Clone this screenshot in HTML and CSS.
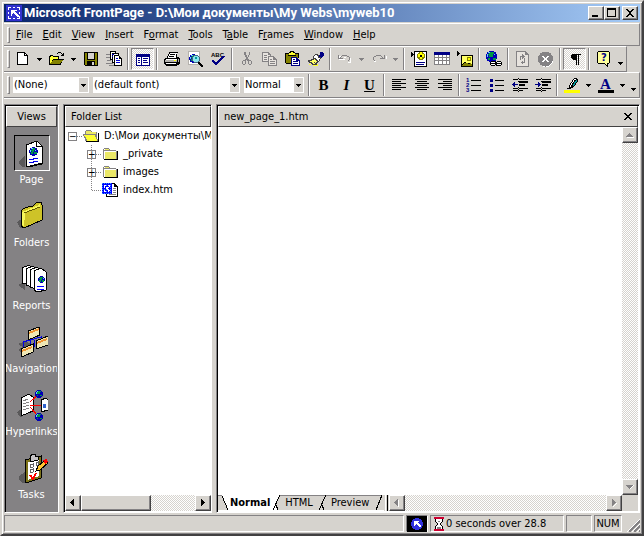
FILE: index.html
```html
<!DOCTYPE html>
<html lang="en">
<head>
<meta charset="utf-8">
<title>Microsoft FrontPage</title>
<link rel="stylesheet" href="styles.css">
</head>
<body>
<svg class="defs" aria-hidden="true">
  <pattern id="bluedither" width="2" height="2" patternUnits="userSpaceOnUse"><path d="M0 0h2v2H0z" fill="#00f"/><path d="M0 0h1v1H0z" fill="#3192ff"/></pattern>
  <symbol id="down" viewBox="0 0 5 3"><path d="M0 0h5v1H4v1H3v1H2V2H1V1H0z"/></symbol>
  <symbol id="folder" viewBox="0 0 16 14"><path d="M1 2h1V1h5v1h1v1h6v1h1v8H1z" fill="#848284"/><path d="M15 4h1v9H2v-1h13z"/><path d="M2 3V2h5v1zM2 4h12v8H2z" fill="#fff"/><path d="M3 5h11v7H3zM3 2h4v1H3z" fill="#ebe867"/></symbol>
  <symbol id="globe" viewBox="0 0 10 10"><path d="M3 0h4v1h2v2h1v4H9v2H7v1H3V9H1V7H0V3h1V1h2z" fill="#0000b5"/><path d="M3 1h4v2H6v2H3V4H1V3h2zM6 6h3v2H6zM2 6h2v2H2z" fill="#009a42"/><path d="M2 1h2v1H2zM1 3h1v2H1zM7 3h1v1H7z" fill="#63cfff"/></symbol>
</svg>
<div class="window">
  <header class="titlebar">
    <svg class="appicon" viewBox="0 0 16 16"><path fill="#3131ce" d="M0 0h16v16H0z"/><path d="M2 2h3v1H3v2H2zM7 2h2v1H7zM11 2h3v3h-1V3h-2zM13 7h1v2h-1zM13 11h1v3h-3v-1h2zM7 13h2v1H7zM2 11h1v2h2v1H2zM2 7h1v2H2z" fill="#fff"/><path d="M5 5h6v1H9v1h1v1h1v1h1v1h1v2h-2v-1h-1v-1H9V9H8V8H7v1H6v2H5z" fill="#fff"/></svg>
    <h1>Microsoft FrontPage - D:\Мои документы\My Webs\myweb10</h1>
    <button class="raised winbtn" aria-label="Minimize"><svg viewBox="0 0 12 10"><path d="M2 7h6v2H2z"/></svg></button>
    <button class="raised winbtn" aria-label="Maximize"><svg viewBox="0 0 12 10"><path d="M1 0h9v9H1zM2 2v6h7V2z" fill-rule="evenodd"/></svg></button>
    <button class="raised winbtn closebtn" aria-label="Close"><svg viewBox="0 0 12 10"><path d="M2 1h2v1h1v1h2V2h1V1h2v1H9v1H8v1H7v2h1v1h1v1h1v1H8V8H7V7H5v1H4v1H2V8h1V7h1V6h1V4H4V3H3V2H2z"/></svg></button>
  </header>
  <nav class="bar menubar">
    <span class="grip"></span>
    <button><u>F</u>ile</button><button><u>E</u>dit</button><button><u>V</u>iew</button><button><u>I</u>nsert</button><button>F<u>o</u>rmat</button><button><u>T</u>ools</button><button>T<u>a</u>ble</button><button>F<u>r</u>ames</button><button><u>W</u>indow</button><button><u>H</u>elp</button>
  </nav>
  <div class="bar toolbar standard">
    <span class="grip"></span>
    <button class="tool" aria-label="New"><svg viewBox="0 0 16 16"><path d="M2 1h8v1h1v1h1v1h1v10H2z"/><path d="M3 2h6v3h3v8H3zM10 3h1v1h-1z" fill="#fff"/></svg></button>
    <button class="drop" aria-label="New options"><svg><use href="#down"/></svg></button>
    <button class="tool" aria-label="Open"><svg viewBox="0 0 16 16"><path d="M0 5h1V4h3v1h6v3h5v1h-1v1h-1v2h-1v2H0z"/><path d="M1 6h1V5h2v1h5v2H4v1H3v2H2v1H1z" fill="#ff3"/><path d="M4 9h10v1h-1v1h-1v1h-1v1H1v-1h1v-1h1v-1h1z" fill="#848200"/><path d="M8 2h1V1h3v1h1v1h1V2h1v3h-3V4h1V3h-1V2H9v1H8z"/></svg></button>
    <button class="drop" aria-label="Open options"><svg><use href="#down"/></svg></button>
    <button class="tool" aria-label="Save"><svg viewBox="0 0 16 16"><path d="M1 1h14v14H2v-1H1z"/><path d="M2 2h2v7h8V2h2v12h-2v-4H4v4H2z" fill="#848200"/><path d="M5 2h6v6H5zM9 11h2v3H9z" fill="#d6d3ce"/></svg></button>
    <button class="tool" aria-label="Publish"><svg viewBox="0 0 16 16"><path d="M0 3h4v1H0zM0 6h4v1H0zM1 9h4v1H1zM0 12h7v1H0zM3 14h6v1H3z" fill="#848284"/><path d="M4 0h6v9H4z"/><path d="M5 1h4v7H5z" fill="#fff"/><path d="M6 2h7v10H6z"/><path d="M7 3h5v8H7z" fill="#fff"/><path d="M8 4h5v1h1v1h1v1h1v8H8z"/><path d="M9 5h4v3h2v6H9z" fill="#fff"/><path d="M6 3h2v1H6zM6 5h1v1H6zM10 7h2v1h-2zM10 9h4v1h-4zM10 11h4v1h-4z" fill="#00c"/></svg></button>
    <span class="sep"></span>
    <button class="tool pressed" aria-label="Folder list" aria-pressed="true"><svg viewBox="0 0 16 16"><path d="M1 3h14v12H1z" fill="#000084"/><path d="M2 6h4v8H2zM7 6h7v8H7z" fill="#fff"/><path d="M3 7h2v1H3zM3 9h2v1H3zM3 11h2v1H3zM8 7h5v1H8zM8 9h4v1H8zM8 11h5v1H8z" fill="#000084"/></svg></button>
    <span class="sep"></span>
    <button class="tool" aria-label="Print"><svg viewBox="0 0 16 16"><path d="M5 1h9v1h-1v4h2v1h1v6h-1v1h-2v1H2v-1H1v-1H0V8h1V7h2V5h1V3h1z"/><path d="M6 2h7v1h-1v4H4V5h1V3h1z" fill="#fff"/><path d="M6 3h5v1H6zM5 5h5v1H5z"/><path d="M2 8h11v1H2zM2 12h10v1H2z" fill="#fff"/><path d="M1 9h12v2H1zM14 8h1v3h-1z" fill="#b5b2ad"/><path d="M10 9h2v1h-2z" fill="#ff0"/></svg></button>
    <button class="tool" aria-label="Preview in browser"><svg viewBox="0 0 16 16"><path d="M1 0h12v14H1z" fill="#b5b2ad"/><path d="M2 1h10v12H2z" fill="#fff"/><use href="#globe" x="2" y="3" width="9" height="9"/><path d="M7 4h4v1h1v1h1v4h-1v1h-1v1H7v-1H6v-1H5V6h1V5h1z" fill="#426384"/><path d="M7 5h4v1h1v4h-1v1H7v-1H6V6h1z" fill="#8ce7ef"/><path d="M8 6h2v2H8z" fill="#009a9c"/><path d="M11 11h2v1h1v1h1v1h1v2h-2v-1h-1v-1h-1v-1h-1z"/></svg></button>
    <button class="tool" aria-label="Spelling"><svg viewBox="0 0 16 16"><text x="1" y="6" class="abc">ABC</text><path d="M2 9h2v1h1v1h2v-1h1V9h1V8h1V7h1V6h1V5h3v1h-1v1h-1v1h-1v1h-1v1h-1v1H9v1H8v1H7v1H5v-1H4v-1H3v-1H2z" fill="#000084"/></svg></button>
    <span class="sep"></span>
    <button class="tool" aria-label="Cut" disabled><svg viewBox="0 0 16 16"><path d="M6 1h1v3h1v2h1v2h1v1h2v1h1v3h-1v1h-2v-1H9v-3H8V9H7v1h0v3H6v1H4v-1H3v-3h1V9h2V8h1V6H6V4H5V1zM10 1h1v3h-1v2H9V4h1zM4 10v3h2v-3zM10 10v3h2v-3z" fill="#848284" fill-rule="evenodd"/></svg></button>
    <button class="tool" aria-label="Copy" disabled><svg viewBox="0 0 16 16"><path d="M0 1h7v1h1v1h1v8H0zM6 5h6v1h1v1h1v1h1v7H6z" fill="#848284"/><path d="M1 2h5v2h2v1H6v5H1zM7 6h4v3h3v5H7z" fill="#e7e3de"/><path d="M2 4h3v1H2zM2 6h3v1H2zM2 8h3v1H2zM8 8h2v1H8zM8 10h5v1H8zM8 12h5v1H8z" fill="#848284"/></svg></button>
    <button class="tool" aria-label="Paste"><svg viewBox="0 0 16 16"><path d="M0 2h4V1h1V0h4v1h1v1h4v5h-1v6H1v-1H0z"/><path d="M1 3h12v9H1z" fill="#848200"/><path d="M4 2h2V1h2v1h2v2H4z" fill="#ff3"/><path d="M3 4h8v1H3z"/><path d="M6 6h6v1h1v1h1v1h1v6H6z" fill="#000084"/><path d="M7 7h4v3h3v4H7z" fill="#fff"/><path d="M8 8h2v1H8zM8 10h5v1H8zM8 12h5v1H8z" fill="#000084"/></svg></button>
    <button class="tool" aria-label="Format painter"><svg viewBox="0 0 16 16"><path d="M12 1h3v1h1v3h-1v1h-1v1h-3V4h1z" fill="#000084"/><path d="M7 3h3v1h1v2h2v2h-1v2h-1v1h-1v1H9v2H8v1H5v-1H4v-1H3v-1H1v-1H0V9h3V8h2V5h1V4h1z" fill="#424142"/><path d="M7 4h2v1h1v2h2v1h-1v2h-1V9H9V8H8V7H6V5h1z" fill="#fff"/><path d="M4 9h2V8h1v1h1v1h1v1H8v1H7V11H6v1h1v1H5v-1H4v-1H2v-1h2z" fill="#ff6"/><path d="M5 14h4v-1h1v2H5zM1 13h2v1H1z" fill="#ff3"/></svg></button>
    <span class="sep"></span>
    <button class="tool" aria-label="Undo" disabled><svg viewBox="0 0 16 16"><path d="M2 5h2v3h4v1H2zM5 7h2V6h5v1h1v4h-2v1h3V7h-1V6z" fill="#fff"/><path d="M1 4h1v3h1V6h1V5h1V4h5v1h2v1h1v3h-1v1h-1V9h1V6h-2V5H5v1H4v1h2v1H1z" fill="#848284"/></svg></button>
    <button class="drop" aria-label="Undo list" disabled><svg><use href="#down"/></svg></button>
    <button class="tool" aria-label="Redo" disabled><svg viewBox="0 0 16 16"><path d="M10 8h6V5h-1v3h-5zM3 10h2v1H3z" fill="#fff"/><path d="M14 4h-1v3h-1V6h-1V5h-1V4H5v1H3v1H2v3h1v1h1V9H3V6h2V5h5v1h1v1H9v1h5z" fill="#848284"/></svg></button>
    <button class="drop" aria-label="Redo list" disabled><svg><use href="#down"/></svg></button>
    <span class="sep"></span>
    <button class="tool" aria-label="Component"><svg viewBox="0 0 16 16"><path d="M0 1h1v1h1v1h1v1H2v1H1v1H0zM3 0h13v16H3z"/><path d="M4 1h11v14H4z" fill="#fff"/><path d="M8 1h4v1h1v1h1v4h-1v1h-1v1H8V8H7V7H6V3h1V2h1z" fill="#848200"/><path d="M9 1h2v2h2v3h-2v2H9V6H7V3h2z" fill="#ff0"/><path d="M9 4h2v2H9z"/><path d="M5 11h9v1H5zM5 13h8v1H5z" fill="#000084"/></svg></button>
    <button class="tool" aria-label="Insert table"><svg viewBox="0 0 16 16"><path d="M0 1h16v13H0z" fill="#848284"/><path d="M0 1h16v3H0z" fill="#000084"/><path d="M1 4h3v2H1zM5 4h3v2H5zM9 4h3v2H9zM13 4h2v2h-2zM1 7h3v2H1zM5 7h3v2H5zM9 7h3v2H9zM13 7h2v2h-2zM1 10h3v3H1zM5 10h3v3H5zM9 10h3v3H9zM13 10h2v3h-2z" fill="#fff"/></svg></button>
    <button class="tool" aria-label="Insert picture"><svg viewBox="0 0 16 16"><path d="M0 0h1v1h1v1h1v1H2v1H1v1H0zM4 4h12v12H4z"/><path d="M5 5h10v10H5z" fill="#ff6"/><path d="M10 6h4v4h-4z" fill="#848200"/><path d="M11 7h2v2h-2z" fill="#ff0"/><path d="M5 13h1v-1h1v-1h2v1h2v1h1v-1h2v1h1v2H5z" fill="#848200"/><path d="M5 13h1v-1h1v-1h2v1H7v1H6v1H5zM11 12h2v1h-2z"/></svg></button>
    <span class="sep"></span>
    <button class="tool" aria-label="Hyperlink"><svg viewBox="0 0 16 16"><use href="#globe" width="11" height="11"/><path d="M5 10h5v1h1v-1h4v1h1v3h-1v1h-5v-1H9v1H5v-1H4v-3h1z"/><path d="M5 11h4v1H5zM5 13h4v1H5zM11 11h4v1h-4zM11 13h4v1h-4z" fill="#fff"/></svg></button>
    <span class="sep"></span>
    <button class="tool" aria-label="Refresh" disabled><svg viewBox="0 0 16 16"><path d="M1 0h10v1h1v1h1v1h1v13H1z" fill="#848284"/><path d="M2 1h8v3h3v11H2z" fill="#e7e3de"/><path d="M7 3h1v1h1v1h1v1H9v1H8v1H7V6H6v3H5V5h2zM10 7v5H8v1H7v-1H6v-1h1v-1h1v1h1V7z" fill="#848284"/></svg></button>
    <button class="tool" aria-label="Stop" disabled><svg viewBox="0 0 16 16"><circle cx="8" cy="9" r="7" fill="#fff"/><circle cx="7.500" cy="8" r="7.500" fill="#848284"/><path d="M4 5h2v1h1v1h1V6h1V5h2v1h-1v1H9v2h1v1h1v1H9v-1H8V9H7v1H6v1H4v-1h1V9h1V7H5V6H4z" fill="#fff"/></svg></button>
    <span class="sep"></span>
    <button class="tool pressed" aria-label="Show all" aria-pressed="true"><svg viewBox="0 0 16 16"><path d="M5 3h9v1h-2v10h-1V4h-1v10H9V9H6V8H5V7H4V4h1z"/></svg></button>
    <span class="sep"></span>
    <button class="tool" aria-label="Help"><svg viewBox="0 0 16 16"><path d="M2 0h11v1h1v11h-1v1h-1v3h-1v-1h-1v-1H9v-1H2v-1H1V1h1z"/><path d="M2 1h11v11h-2v2h-1v-1H9v-1H2z" fill="#ffff9c"/><text x="5" y="10" class="help">?</text></svg></button>
    <button class="drop low" aria-label="More buttons"><svg><use href="#down"/></svg></button>
  </div>
  <div class="bar toolbar formatting">
    <span class="grip"></span>
    <label class="combo style"><select aria-label="Style"><option>(None)</option></select><span class="combo-arrow"><svg><use href="#down"/></svg></span></label>
    <label class="combo font"><select aria-label="Font"><option>(default font)</option></select><span class="combo-arrow"><svg><use href="#down"/></svg></span></label>
    <label class="combo size"><select aria-label="Font size"><option>Normal</option></select><span class="combo-arrow"><svg><use href="#down"/></svg></span></label>
    <span class="sep"></span>
    <button class="tool letter"><b>B</b></button>
    <button class="tool letter"><i>I</i></button>
    <button class="tool letter"><u>U</u></button>
    <span class="sep"></span>
    <button class="tool" aria-label="Align left"><svg viewBox="0 0 16 16"><path d="M1 2h14v1H1zM1 4h9v1H1zM1 6h14v1H1zM1 8h9v1H1zM1 10h14v1H1zM1 12h9v1H1z"/></svg></button>
    <button class="tool" aria-label="Center"><svg viewBox="0 0 16 16"><path d="M1 2h14v1H1zM3 4h10v1H3zM1 6h14v1H1zM3 8h10v1H3zM1 10h14v1H1zM3 12h10v1H3z"/></svg></button>
    <button class="tool" aria-label="Align right"><svg viewBox="0 0 16 16"><path d="M1 2h14v1H1zM6 4h9v1H6zM1 6h14v1H1zM6 8h9v1H6zM1 10h14v1H1zM6 12h9v1H6z"/></svg></button>
    <span class="sep"></span>
    <button class="tool" aria-label="Numbering"><svg viewBox="0 0 16 16"><g class="nums"><text x="0" y="5">1</text><text x="0" y="10">2</text><text x="0" y="15">3</text></g><path d="M5 3h10v1H5zM5 8h10v1H5zM5 13h10v1H5z"/></svg></button>
    <button class="tool" aria-label="Bullets"><svg viewBox="0 0 16 16"><path d="M1 2h3v3H1zM1 7h3v3H1zM1 12h3v3H1z" fill="#000084"/><path d="M6 3h9v1H6zM6 8h9v1H6zM6 13h9v1H6z"/></svg></button>
    <button class="tool" aria-label="Decrease indent"><svg viewBox="0 0 16 16"><path d="M1 2h5v1H1zM7 2h9v1H7zM7 4h9v2H7zM7 7h6v2H7zM1 11h5v1H1zM7 11h9v1H7zM1 13h5v1H1zM7 13h4v1H7zM6 1h1v1H6zM6 4h1v1H6zM6 10h1v1H6zM6 12h1v1H6zM6 14h1v1H6z"/><path d="M0 7h1V6h1V5h1v2h3v1H3v2H2V9H1V8H0z" fill="#000084"/></svg></button>
    <button class="tool" aria-label="Increase indent"><svg viewBox="0 0 16 16"><path d="M1 2h5v1H1zM7 2h9v1H7zM7 4h9v2H7zM7 7h6v2H7zM1 11h5v1H1zM7 11h9v1H7zM1 13h5v1H1zM7 13h4v1H7zM6 1h1v1H6zM6 4h1v1H6zM6 10h1v1H6zM6 12h1v1H6zM6 14h1v1H6z"/><path d="M6 7H5V6H4V5H3v2H0v1h3v2h1V9h1V8h1z" fill="#000084"/></svg></button>
    <span class="sep"></span>
    <button class="tool" aria-label="Highlight"><svg viewBox="0 0 16 16"><path d="M0 13h16v3H0z" fill="#ff0"/><path d="M10 1h3v1h1v3h-1v1h-1v2h-1v1h-1v1H9v1H7v1H3v-1h2V8h1V6h1V5h1V3h1V2h1z"/><path d="M10 2h2v1h-2v2H9v1H8v2H7v2H6V8h1V6h1V5h1V3h1z" fill="#fff"/><path d="M12 3h1v2h-1v1h-1v2h-1v1H9V7h1V5h1V4h1z" fill="#009a9c"/></svg></button>
    <button class="drop" aria-label="Highlight colors"><svg><use href="#down"/></svg></button>
    <button class="tool" aria-label="Font color"><svg viewBox="0 0 16 16"><path d="M0 13h16v3H0z"/><text x="2" y="12" class="fontcolor">A</text></svg></button>
    <button class="drop" aria-label="Font colors"><svg><use href="#down"/></svg></button>
    <button class="drop low" aria-label="More buttons"><svg><use href="#down"/></svg></button>
  </div>
  <main class="workspace">
    <nav class="panel views">
      <h2 class="head">Views</h2>
      <div class="viewlist">
        <button class="view"><span class="pic selected"><svg viewBox="0 0 32 32"><path d="M3 24l6-5v11H7l-4-3z" fill="#5a595a"/><path d="M10 8L21 4l5 5v17l-16 4z" fill="#fff" stroke="#000"/><path d="M20 5v5l6-1M26 9v18l-14 3" fill="none" stroke="#000"/><use href="#globe" x="13" y="10" width="9" height="9"/><path d="M13 23l9-2M13 26l9-2" stroke="#0000e7"/></svg></span>Page</button>
        <button class="view"><span class="pic"><svg viewBox="0 0 32 32"><path d="M1 22l5-3v9H4z" fill="#5a595a"/><path d="M5 11l2-2 7-3 2 1 5-5h4l1 3v15L8 28l-3-2z" fill="#cec328" stroke="#000"/><path d="M6 12l17-7 1-2v4L9 13l-1 14-2-2z" fill="#f7f75a"/><path d="M8 13l16-6" stroke="#635900"/></svg></span>Folders</button>
        <button class="view"><span class="pic"><svg viewBox="0 0 32 32"><path d="M2 22l7-3v8z" fill="#5a595a"/><g fill="#fff" stroke="#000"><path d="M6 5l7-3 2 2v18l-9-2z"/><path d="M10 6l7-3 2 2v20l-9-3z"/><path d="M14 7l7-3 2 2v21l-9-3z"/><path d="M18 8l7-3 5 4v18l-9 2-3-2z"/></g><use href="#globe" x="22" y="13" width="7" height="7"/><path d="M21 24l7-1M21 27l7-1" stroke="#00f"/></svg></span>Reports</button>
        <button class="view"><span class="pic"><svg viewBox="0 0 32 32"><path d="M2 18l8-3 6 4-8 3zM2 24l5-3v8z" fill="#5a595a"/><path d="M14 13v5M7 21v-5l18-5v5M18 14v7" fill="none" stroke="#0000e7"/><g fill="#efe7b5" stroke="#000"><path d="M12 5l11-4 1 8-12 5z"/><path d="M5 23l12-5v8L6 31z"/><path d="M20 15l12-5v9l-12 4z"/></g><path d="M13 6l10-4v2L13 8zM6 24l10-4v2L6 26zM21 16l10-4v2l-10 4z" fill="#ef9231"/></svg></span>Navigation</button>
        <button class="view"><span class="pic"><svg viewBox="0 0 32 32"><path d="M1 23l5-3v8H4z" fill="#5a595a"/><path d="M5 9l8-4 4 3v14L5 27z" fill="#fff" stroke="#000"/><path d="M7 12l5-2M7 15l6-2M7 18l6-2M7 21l6-2" stroke="#848284"/><path d="M14 13l8-7M14 16h11M14 18l8 9" stroke="red" fill="none"/><path d="M25 11l5-2 2 2v10l-7 2z" fill="#fff" stroke="#000"/><path d="M27 15h3v4h-3z" fill="#3163ce"/><use href="#globe" x="19" y="1" width="8" height="8"/><use href="#globe" x="19" y="24" width="8" height="8"/></svg></span>Hyperlinks</button>
        <button class="view"><span class="pic"><svg viewBox="0 0 32 32"><path d="M3 24l6-4v11H7l-4-3z" fill="#5a595a"/><path d="M9 8l16-4v22l-15 5z" fill="#7b7118" stroke="#000"/><path d="M12 10l11-3v17l-11 4z" fill="#fff"/><path d="M14 5l2-3h3v2l3 1v3l-8 2z" fill="#c6c3c6" stroke="#000"/><path d="M14 13l3-1v3l-3 1zM14 18l3-1v3l-3 1zM20 11l2-1v3l-2 1z" fill="none" stroke="#636163"/><path d="M14 23l3 4 3-6" fill="none" stroke="red" stroke-width="2"/><path d="M20 19l2-5 8-6 2 3-8 7z" fill="#ffc331" stroke="#000"/><path d="M27 8l4-1 1 3-3 2z" fill="red"/></svg></span>Tasks</button>
      </div>
    </nav>
    <section class="panel folders">
      <h2 class="head">Folder List</h2>
      <ul class="tree">
        <li><span class="row"><span class="toggle">−</span><svg class="node" viewBox="0 0 16 14"><path d="M2 2h1V1h5v1h1v1h5v9H2z" fill="#848284"/><path d="M3 2h5v1h5v2H3z" fill="#ebe867"/><path d="M0 5h12v1h1v2h1v2h1v3H3v-2H2V9H1V7H0z" fill="#848284"/><path d="M1 6h11v2h1v2h1v2H4v-2H3V8H2V7H1z" fill="#ff3"/><path d="M3 12h12V4h1v9H3z"/></svg><span>D:\Мои документы\M</span></span>
          <ul>
            <li><span class="row"><span class="toggle">+</span><svg class="node" viewBox="0 0 16 14"><use href="#folder"/></svg><span>_private</span></span></li>
            <li><span class="row"><span class="toggle">+</span><svg class="node" viewBox="0 0 16 14"><use href="#folder"/></svg><span>images</span></span></li>
            <li><span class="row leaf"><svg class="node" viewBox="0 0 16 14"><path d="M4 0h9v1h1v1h1v1h1v11H4z"/><path d="M5 1h7v3h3v9H5z" fill="#fff"/><path d="M11 5h3v1h-3zM11 7h3v1h-3zM11 9h3v1h-3zM7 11h7v1H7z" fill="#848284"/><path d="M0 0h10v11H0z" fill="url(#bluedither)"/><path d="M2 2h2v1H3v2H2zM6 2h2v2H7V3H6zM4 4h3v1H6v1h1v1h1v1H7v1H6V7H5V6H4zM2 7h1v1h1v1H2z" fill="#fff"/></svg><span>index.htm</span></span></li>
          </ul>
        </li>
      </ul>
      <div class="scroll hscroll">
        <button class="raised sb" aria-label="Scroll left"><svg viewBox="0 0 8 8"><path d="M5 0v7H4V6H3V5H2V4H1V3h1V2h1V1h1V0z"/></svg></button>
        <span class="raised thumb"></span><span class="track"></span>
        <button class="raised sb" aria-label="Scroll right"><svg viewBox="0 0 8 8"><path d="M2 0v7h1V6h1V5h1V4h1V3H5V2H4V1H3V0z"/></svg></button>
      </div>
    </section>
    <section class="panel editor">
      <div class="head"><h2>new_page_1.htm</h2><button class="shut" aria-label="Close page"><svg viewBox="0 0 8 7"><path d="M0 0h2v1h1v1h2V1h1V0h2v1H7v1H6v1H5v1h1v1h1v1h1v1H6V6H5V5H3v1H2v1H0V6h1V5h1V4h1V3H2V2H1V1H0z"/></svg></button></div>
      <div class="page">
        <div class="canvas" contenteditable="true" role="textbox" aria-label="Page"></div>
        <div class="scroll vscroll">
          <button class="raised sb" aria-label="Scroll up" disabled><svg viewBox="0 0 8 8"><path d="M1 6h7v1H1z" fill="#fff"/><path d="M0 5h7v1H0zM1 4h5v1H1zM2 3h3v1H2zM3 2h1v1H3z"/></svg></button>
          <span class="track"></span>
          <button class="raised sb" aria-label="Scroll down" disabled><svg viewBox="0 0 8 8"><path d="M4 6h1V5h1V4h1V3h1V2H7v1H6v1H5v1H4z" fill="#fff"/><path d="M0 2h7v1H6v1H5v1H4v1H3V5H2V4H1V3H0z"/></svg></button>
        </div>
      </div>
      <div class="bottom">
        <div class="tabs">
          <svg class="slope" viewBox="0 0 12 15"><path d="M0 0h4l6 15H0z" fill="#d6d3ce"/><path d="M0 0h4v1H0z" fill="#848284"/><path d="M4 1l6 14" stroke="#000"/></svg>
          <button class="tab on">Normal</button>
          <svg class="slope" viewBox="0 0 12 15"><path d="M10 0h2v15H8L6 10z" fill="#d6d3ce"/><path d="M10 0h2v1h-2z" fill="#848284"/><path d="M3 15L10 0M6 10l2 5" stroke="#000"/></svg>
          <button class="tab">HTML</button>
          <svg class="slope" viewBox="0 0 12 15"><path d="M0 0h12v15H0z" fill="#d6d3ce"/><path d="M0 0h12v1H0z" fill="#848284"/><path d="M3 15L10 0M6 10l2 5" stroke="#000"/></svg>
          <button class="tab">Preview</button>
          <svg class="slope" viewBox="0 0 12 15"><path d="M0 0h12v15H0z" fill="#d6d3ce"/><path d="M0 0h10v1H0z" fill="#848284"/><path d="M4 15L10 0" stroke="#000"/></svg>
        </div>
        <span class="split"></span>
        <div class="scroll hscroll">
          <button class="raised sb" aria-label="Scroll left" disabled><svg viewBox="0 0 8 8"><path d="M5 1h1v7H5z" fill="#fff"/><path d="M5 0v7H4V6H3V5H2V4H1V3h1V2h1V1h1V0z"/></svg></button>
          <span class="track"></span>
          <button class="raised sb" aria-label="Scroll right" disabled><svg viewBox="0 0 8 8"><path d="M3 7h1V6h1V5h1V4h1v1H6v1H5v1H4v1H3z" fill="#fff"/><path d="M2 0v7h1V6h1V5h1V4h1V3H5V2H4V1H3V0z"/></svg></button>
        </div>
        <span class="corner"></span>
      </div>
    </section>
  </main>
  <footer class="statusbar">
    <span class="pane wide"></span>
    <span class="pane logo"><svg viewBox="0 0 20 16"><path d="M0 0h20v16H0z"/><circle cx="10" cy="8" r="6" fill="#3131de"/><path d="M7 5h5v1h-1v1h1v1h1v1h1v2h-2v-1h-1V9h-1V8H9v1H8v1H7z" fill="#fff"/></svg></span>
    <span class="pane time"><svg viewBox="0 0 11 14"><path d="M1 2h8v3H8v1H7v2h1v1h1v3H1V9h1V8h1V6H2V5H1z"/><path d="M2 2h6v3H7v1H6v2h1v1h1v3H2V9h1V8h1V6H3V5H2z" fill="#fff"/><path d="M0 0h10v2H0zM0 12h10v2H0z" fill="#ce0031"/><path d="M3 10h4v2H3zM4 4h2v1H4z" fill="#848284"/></svg>0 seconds over 28.8</span>
    <span class="pane blank"></span>
    <span class="pane num">NUM</span>
    <svg class="sizer" viewBox="0 0 13 13"><path d="M0 13L13 0M5 13l8-8M10 13l3-3" stroke="#fff" stroke-width="1"/><path d="M2 13L13 2M7 13l6-6M12 13l1-1" stroke="#848284" stroke-width="2"/></svg>
  </footer>
</div>
</body>
</html>
```
FILE: styles.css
```css
:root {
  --face: #d6d3ce;
  --shade: #848284;
  --dark: #424142;
}
* { box-sizing: border-box; }
html, body { height: 100%; margin: 0; }
body {
  font: 11px/14px "DejaVu Sans Condensed", "DejaVu Sans", sans-serif;
  color: #000;
  background: var(--face);
}
h1, h2 { margin: 0; font: inherit; }
button { font: inherit; color: inherit; background: none; border: 0; padding: 0; }
svg { display: block; flex: none; shape-rendering: crispEdges; }
.defs { position: absolute; width: 0; height: 0; }

.window {
  display: flex;
  flex-direction: column;
  height: 100vh;
  padding: 2px;
  background: var(--face);
  border: 2px solid;
  border-color: var(--face) var(--dark) var(--dark) var(--face);
  box-shadow: inset 1px 1px #fff, inset -1px -1px var(--shade);
}
.raised {
  background: var(--face);
  border: 1px solid;
  border-color: #fff var(--dark) var(--dark) #fff;
  box-shadow: inset -1px -1px var(--shade);
}

.titlebar {
  display: flex;
  flex: none;
  align-items: center;
  height: 18px;
  margin-bottom: 1px;
  padding: 0 2px;
  background: linear-gradient(90deg, #08246b, #a5cbf7);
  color: #fff;
}
.titlebar h1 { flex: 1; min-width: 0; overflow: hidden; white-space: nowrap; font: bold 13px/16px Roboto, sans-serif; }
.appicon { width: 16px; height: 16px; margin-right: 2px; }
.winbtn { display: grid; flex: none; place-items: center; width: 16px; height: 14px; }
.winbtn svg { width: 12px; height: 10px; }
.closebtn { margin-left: 2px; }

.bar {
  display: flex;
  flex: none;
  align-items: center;
  height: 26px;
  padding-left: 3px;
  border-top: 1px solid #fff;
  border-bottom: 1px solid var(--shade);
  border-right: 1px solid var(--shade);
}
.grip {
  flex: none;
  width: 3px;
  height: 18px;
  margin-right: 1px;
  border: 1px solid;
  border-color: #fff var(--shade) var(--shade) #fff;
}
.menubar { height: 23px; }
.menubar button { padding: 0 5px; }
.menubar .grip { height: 16px; }
.standard { align-self: flex-start; }
.tool { display: grid; flex: none; place-items: center; width: 23px; height: 22px; }
.tool svg { width: 16px; height: 16px; }
.drop { display: grid; flex: none; place-items: center; width: 11px; height: 22px; }
.drop svg, .combo-arrow svg { width: 5px; height: 3px; }
.drop:disabled svg { fill: var(--shade); }
.drop.low { padding-top: 8px; }
.sep { flex: none; width: 2px; height: 22px; margin: 0 2px; border-left: 1px solid var(--shade); border-right: 1px solid #fff; }
.pressed {
  border: 1px solid;
  border-color: var(--shade) #fff #fff var(--shade);
  background: repeating-conic-gradient(#fff 0 25%, var(--face) 0 50%) 0 0 / 2px 2px;
}
.abc { font: bold 6px "Liberation Sans", sans-serif; }
.help { font: bold 10px "DejaVu Sans", sans-serif; fill: #000084; }
.nums { font: bold 6px "Liberation Sans", sans-serif; fill: #000084; }
.fontcolor { font: bold 15px "Liberation Serif", serif; fill: #000084; }
.letter { font: bold 15px/16px "Liberation Serif", serif; }

.combo { display: flex; flex: none; height: 16px; background: #fff; }
.combo select { flex: 1; min-width: 0; padding: 0 1px; border: 0; appearance: none; background: #fff; color: #000; font: inherit; }
.combo-arrow { display: grid; place-items: center; width: 9px; height: 14px; margin: 1px; background: var(--face); }
.style { width: 76px; margin-left: 2px; }
.font { width: 147px; margin-left: 4px; }
.size { width: 60px; margin: 0 2px 0 4px; }

.workspace {
  display: grid;
  flex: 1;
  grid-template-columns: 55px 149px minmax(0, 1fr);
  gap: 4px;
  min-height: 0;
  padding: 5px 0 1px;
  border-top: 1px solid #fff;
}
.panel {
  display: flex;
  flex-direction: column;
  min-width: 0;
  min-height: 0;
  border: 1px solid;
  border-color: var(--shade) #fff #fff var(--shade);
  box-shadow: inset 1px 1px #000;
  padding: 1px;
}
.head {
  display: flex;
  flex: none;
  align-items: center;
  height: 21px;
  padding: 0 5px;
  background: var(--face);
  border: 1px solid;
  border-color: #fff var(--dark) var(--dark) #fff;
}
.views { background: var(--shade); color: #fff; }
.views .head { justify-content: center; color: #000; }
.viewlist { display: flex; flex-direction: column; padding-top: 8px; overflow: hidden; }
.view { display: flex; flex: none; flex-direction: column; align-items: center; height: 63px; line-height: 18px; white-space: nowrap; }
.pic { display: grid; place-items: center; width: 36px; height: 36px; }
.pic svg { width: 32px; height: 32px; }
.selected { border: 1px solid; border-color: #000 #fff #fff #000; }

.folders { background: #fff; padding-right: 0; }
.tree { flex: 1; margin: 0; padding: 0 0 0 3px; list-style: none; overflow: hidden; }
.tree ul {
  margin: 0;
  padding: 0 0 0 19px;
  list-style: none;
  background: repeating-linear-gradient(var(--shade) 0 1px, transparent 1px 2px) 23px 0 / 1px 45px no-repeat;
}
.row { display: flex; align-items: center; height: 18px; white-space: nowrap; }
.row::before { content: ""; flex: none; order: 1; width: 6px; height: 1px; background: repeating-linear-gradient(90deg, var(--shade) 0 1px, transparent 1px 2px); }
.row span:last-child { order: 3; }
.toggle { display: grid; flex: none; place-items: center; width: 9px; height: 9px; border: 1px solid var(--shade); background: #fff; font-size: 10px; line-height: 7px; }
.node { order: 2; width: 16px; height: 14px; margin-right: 5px; }
.leaf::before { order: 0; width: 10px; margin-left: 5px; }

.scroll { display: flex; flex: none; height: 16px; }
.sb { display: grid; flex: none; place-items: center; width: 16px; height: 16px; }
.sb svg { width: 8px; height: 8px; }
.sb:disabled svg { fill: var(--shade); }
.track { flex: 1; background: repeating-conic-gradient(#fff 0 25%, var(--face) 0 50%) 0 0 / 2px 2px; }
.thumb { width: 48%; }
.vscroll { flex-direction: column; width: 16px; height: auto; }

.editor { background: #fff; }
.editor .head { justify-content: space-between; padding-right: 5px; }
.shut svg { width: 8px; height: 7px; }
.page { display: flex; flex: 1; min-height: 0; }
.canvas { flex: 1; outline: 0; }
.bottom { display: flex; flex: none; height: 16px; background: var(--face); }
.tabs { display: flex; flex: none; align-items: stretch; background: #fff; border-bottom: 1px solid #fff; }
.tab { padding: 0 3px; line-height: 14px; background: var(--face); border-top: 1px solid var(--shade); }
.tab.on { padding: 0; background: #fff; border-color: #fff; font-weight: bold; }
.slope { width: 12px; height: 15px; }
.split { flex: none; width: 3px; margin: 0 1px; border-left: 1px solid #fff; border-right: 1px solid #000; }
.bottom .hscroll { flex: 1; }
.corner { width: 16px; }

.statusbar { display: flex; flex: none; gap: 2px; height: 18px; padding-top: 1px; }
.pane { display: flex; flex: none; align-items: center; height: 17px; border: 1px solid; border-color: var(--shade) #fff #fff var(--shade); white-space: nowrap; }
.wide { flex: 1; }
.logo { width: 22px; }
.logo svg { width: 20px; height: 16px; }
.time { width: 134px; padding-left: 3px; gap: 1px; }
.time svg { width: 11px; height: 14px; }
.blank { width: 26px; }
.num { justify-content: center; width: 28px; }
.sizer { align-self: flex-end; width: 13px; height: 13px; margin-left: 3px; }
```
